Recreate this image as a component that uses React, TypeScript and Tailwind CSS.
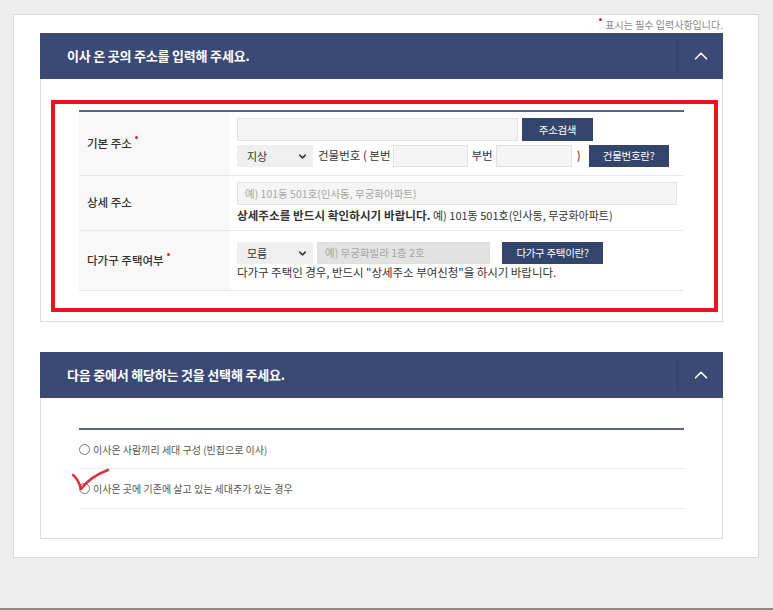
import React from "react";
import { ChevronDown, ChevronUp } from "lucide-react";

function Dot() {
  return <span className="relative -top-[6px] ml-[3px] inline-block h-[3px] w-[3px] rounded-full bg-[#d7262e]" />;
}

function FakeSelect({ value }: { value: string }) {
  return (
    <div className="flex h-[22px] w-[76px] items-center justify-between bg-[#efefef] pl-[10px] pr-[5px] text-[11px] text-[#333]">
      <span>{value}</span>
      <ChevronDown size={11} strokeWidth={3.2} className="text-[#333]" />
    </div>
  );
}

function Field({ w, h = 23, placeholder, disabled }: { w: string; h?: number; placeholder?: string; disabled?: boolean }) {
  return (
    <div
      className={`${w} ${h === 23 ? "h-[23px]" : "h-[22px]"} flex items-center border px-[7px] text-[10.5px] text-[#a5a5a5] ${
        disabled ? "border-[#dedede] bg-[#e2e2e2]" : "border-[#e3e3e3] bg-[#f5f5f5]"
      }`}
    >
      {placeholder}
    </div>
  );
}

function NavyButton({ w, h, children }: { w: string; h: string; children: React.ReactNode }) {
  return (
    <div className={`${w} ${h} flex items-center justify-center bg-[#34456c] text-[10.5px] tracking-[-0.3px] text-white`}>{children}</div>
  );
}

function PanelHeader({ title }: { title: string }) {
  return (
    <div className="flex h-[46px] items-center bg-[#3a4a74]">
      <div className="flex-1 pl-[27px] text-[13px] font-bold tracking-[-0.2px] text-white">{title}</div>
      <div className="h-[32px] w-px bg-[#32416a]" />
      <div className="flex w-[45px] items-center justify-center">
        <ChevronUp size={22} strokeWidth={1.8} className="text-white" />
      </div>
    </div>
  );
}

export default function App() {
  return (
    <div className="relative h-[610px] w-[773px] overflow-hidden border-b-2 border-[#8a8a8a] bg-[#eeeeee] pt-[14px] pl-[13px] font-['Noto_Sans_CJK_KR',sans-serif] text-[#333]">
      <div className="w-[746px] border border-[#dadada] bg-white pl-[26px]">
        {/* required notice */}
        <div className="flex h-[18px] w-[683px] items-center justify-end text-[10px] text-[#8a8a8a]">
          <span className="relative -top-[5px] mr-[3px] inline-block h-[3px] w-[3px] rounded-full bg-[#d7262e]" />
          표시는 필수 입력사항입니다.
        </div>

        {/* Panel 1 */}
        <div className="w-[683px]">
          <PanelHeader title="이사 온 곳의 주소를 입력해 주세요." />
          <div className="relative border-x border-b border-[#dcdcdc] px-[38px] pt-[31px] pb-[30px]">
            <div className="border-t-2 border-[#5a6482]">
              {/* 기본 주소 */}
              <div className="grid h-[64px] grid-cols-[151px_1fr] border-b border-[#e8e8e8]">
                <div className="flex items-center bg-[#f8f8f8] pl-[8px] text-[11.5px] font-medium text-[#333]">
                  기본 주소<Dot />
                </div>
                <div className="pt-[6px] pl-[7px]">
                  <div className="flex items-center gap-[4px]">
                    <Field w="w-[281px]" />
                    <NavyButton w="w-[71px]" h="h-[23px]">주소검색</NavyButton>
                  </div>
                  <div className="mt-[4px] flex items-center text-[11.5px]">
                    <FakeSelect value="지상" />
                    <span className="ml-[5px] mr-[2px]">건물번호 ( 본번</span>
                    <Field w="w-[75px]" h={22} />
                    <span className="ml-[4px] mr-[3px]">부번</span>
                    <Field w="w-[76px]" h={22} />
                    <span className="ml-[5px] mr-[8px]">)</span>
                    <NavyButton w="w-[80px]" h="h-[22px]">건물번호란?</NavyButton>
                  </div>
                </div>
              </div>

              {/* 상세 주소 */}
              <div className="grid h-[55px] grid-cols-[151px_1fr] border-b border-[#e8e8e8]">
                <div className="flex items-center bg-[#f8f8f8] pl-[8px] text-[11.5px] font-medium text-[#333]">상세 주소</div>
                <div className="pt-[6px] pl-[7px]">
                  <Field w="w-[440px]" placeholder="예) 101동 501호(인사동, 무궁화아파트)" />
                  <div className="mt-[1px] text-[11px] leading-[18px]">
                    <span className="text-[11.5px] font-bold tracking-[0.1px]">상세주소를 반드시 확인하시기 바랍니다.</span>{" "}
                    예) 101동 501호(인사동, 무궁화아파트)
                  </div>
                </div>
              </div>

              {/* 다가구 주택여부 */}
              <div className="grid h-[60px] grid-cols-[151px_1fr] border-b border-[#e8e8e8]">
                <div className="flex items-center bg-[#f8f8f8] pl-[8px] text-[11.5px] font-medium text-[#333]">
                  다가구 주택여부<Dot />
                </div>
                <div className="pt-[11px] pl-[7px]">
                  <div className="flex items-center">
                    <FakeSelect value="모름" />
                    <div className="ml-[4px]">
                      <Field w="w-[173px]" h={22} placeholder="예) 무궁화빌라 1층 2호" disabled />
                    </div>
                    <div className="ml-[12px]">
                      <NavyButton w="w-[101px]" h="h-[22px]">다가구 주택이란?</NavyButton>
                    </div>
                  </div>
                  <div className="text-[11.5px] leading-[16px] tracking-[-0.05px]">
                    다가구 주택인 경우, 반드시 "상세주소 부여신청"을 하시기 바랍니다.
                  </div>
                </div>
              </div>
            </div>

            {/* red annotation box */}
            <div className="pointer-events-none absolute top-[21px] right-[4px] bottom-[9px] left-[10px] border-[4px] border-[#e8141e]" />
          </div>
        </div>

        {/* Panel 2 */}
        <div className="mt-[30px] w-[683px]">
          <PanelHeader title="다음 중에서 해당하는 것을 선택해 주세요." />
          <div className="relative border-x border-b border-[#dcdcdc] px-[38px] pt-[30px] pb-[29px]">
            <div className="border-t-2 border-[#5a6482]">
              <div className="flex h-[39px] items-center border-b border-[#ededed] text-[10px] text-[#555]">
                <span className="mr-[3px] h-[11px] w-[11px] rounded-full border border-[#7a7a7a] bg-white" />
                이사온 사람끼리 세대 구성 (빈집으로 이사)
              </div>
              <div className="flex h-[40px] items-center border-b border-[#ededed] text-[10px] text-[#555]">
                <span className="mr-[3px] h-[11px] w-[11px] rounded-full border border-[#7a7a7a] bg-white" />
                이사온 곳에 기존에 살고 있는 세대주가 있는 경우
              </div>
            </div>
            {/* hand-drawn check mark */}
            <svg className="pointer-events-none absolute left-[30px] top-[70px]" width="42" height="26" viewBox="0 0 42 26">
              <path d="M2 7 C5 9 8 14 10 21 C16 13 26 6 37 2" fill="none" stroke="#df2f3a" strokeWidth="2.6" strokeLinecap="round" strokeLinejoin="round" />
            </svg>
          </div>
        </div>
        <div className="h-[18px]" />
      </div>
    </div>
  );
}
